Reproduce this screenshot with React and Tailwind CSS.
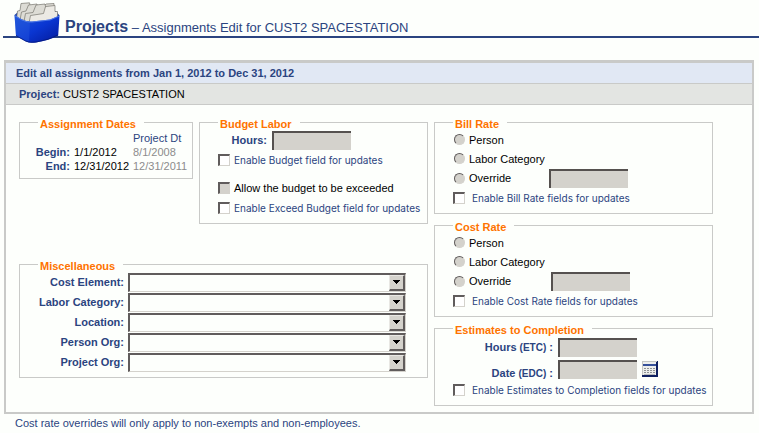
import React from "react";

const miscFields = [
	{ id: "costElement", label: "Cost Element:" },
	{ id: "laborCategory", label: "Labor Category:" },
	{ id: "location", label: "Location:" },
	{ id: "personOrg", label: "Person Org:" },
	{ id: "projectOrg", label: "Project Org:" },
];

function DrawerIcon() {
	return (
		<svg width="48" height="42" viewBox="0 0 48 42" aria-hidden="true">
			<defs>
				<linearGradient id="front" x1="0" y1="0" x2="1" y2="1">
					<stop offset="0" stopColor="#1c55d8" />
					<stop offset="0.5" stopColor="#0a36d2" />
					<stop offset="1" stopColor="#04199a" />
				</linearGradient>
			</defs>
			<path d="M1.500 13 L5 10 L43 9 L46.500 13.500 L40 22 L6 20Z" fill="#1a3fa8" />
			{/* Folders, back to front */}
			<g fill="#dddcd5" stroke="#77766f" strokeWidth="0.7">
				<path d="M3.500 17 L4.500 9 L7 8.500 L8 1.500 L16.500 0.800 L17.500 5 L31 4 L33 2 L41 1.500 V18Z" />
				<path d="M7 18 L8.500 10 L13 9 L15.500 3 L24 2 L25 6 L36 5 V19Z" />
				<path d="M11 19.500 L12.500 11.500 L20 10.500 L23 3 L32 2 L33 7 L38 7 V19Z" />
				<path
					d="M16 21 L17.500 13.500 L30.500 11.500 L32.500 4.500 L42 3.500 L42 9.500 L44.500 9.500 L44.500 18Z"
					fill="#eceae4"
				/>
			</g>
			{/* Drawer body */}
			<path
				d="M1.500 13 L9 17.500 Q14 20 19 19.500 L37 17.500 L46.500 13.500 L45.200 33.500 Q36 38.500 23 40.500 Q17 41.500 13 39.500 L3 34Z"
				fill="url(#front)"
			/>
			<path d="M1.500 13 L9 17.500 Q14 20 17 19.700 L16 40.800 L13 39.500 L3 34Z" fill="#2e62e0" opacity="0.35" />
			<path d="M2 13.800 L9 18 Q14 20.500 19 20 L37 18 L46 14.200" fill="none" stroke="#5c86ee" strokeWidth="0.8" />
			<path d="M3 33.600 L13 39.200 Q17 41 23 40 Q36 38 45 33" fill="none" stroke="#04187a" strokeWidth="0.8" />
		</svg>
	);
}

function CalendarIcon() {
	return (
		<svg width="16" height="16" viewBox="0 0 16 16" shapeRendering="crispEdges" aria-hidden="true">
			<rect width="16" height="16" fill="#0f2060" />
			<rect width="14" height="14" fill="#c4c6c3" />
			<rect x="14" width="1" height="1" fill="#c4c6c3" />
			<rect x="1" y="1" width="13" height="13" fill="#eceeec" />
			<rect x="1" y="3" width="13" height="2" fill="#35509a" />
			<path d="M2 7.500H13M2 9.500H13M2 11.500H13" stroke="#8f9294" strokeDasharray="2 1" />
			<path d="M2 13.500H13" stroke="#b9bbbc" />
		</svg>
	);
}

function Group({ title, className = "", children }) {
	return (
		<fieldset className={`min-w-0 border border-[#c9cac8] pb-[5px] ${className}`}>
			<legend className="ml-[18px] pt-1 pl-[2px] pr-2 text-[11px] leading-3 font-bold text-[#ff7300]">
				{title}
			</legend>
			{children}
		</fieldset>
	);
}

function DisabledInput({ id, label }) {
	return (
		<input
			id={id}
			type="text"
			disabled
			aria-label={label}
			className="h-[19px] w-[79px] border-t-2 border-l-2 border-t-[#55514f] border-l-[#55514f] bg-[#d4d2cc] px-1"
		/>
	);
}

function Check({ id, label, disabled, small = true, wide }) {
	return (
		<div className={`flex h-5 items-center pl-[18px] ${wide ? "gap-[7px]" : "gap-1"}`}>
			<input
				id={id}
				type="checkbox"
				disabled={disabled}
				className={`size-3 shrink-0 appearance-none border-t-2 border-r border-b border-l-2 border-t-[#605c5c] border-r-[#d4d2cc] border-b-[#d4d2cc] border-l-[#605c5c] ${disabled ? "bg-[#d4d2cc]" : "bg-white"}`}
			/>
			<label
				htmlFor={id}
				className={`whitespace-nowrap ${small ? "font-[Inter,sans-serif] text-[10px] text-[#2b4480]" : "text-[11px] text-black"}`}
			>
				{label}
			</label>
		</div>
	);
}

function Radio({ id, name, label }) {
	return (
		<>
			<input
				id={id}
				name={name}
				type="radio"
				disabled
				className="size-[11px] shrink-0 appearance-none rounded-full border border-t-[#605c5c] border-r-[#d4d2cc] border-b-[#d4d2cc] border-l-[#605c5c] bg-[#d4d2cc]"
			/>
			<label htmlFor={id} className="text-black">
				{label}
			</label>
		</>
	);
}

function RateGroup({ id, title, overrideWidth }) {
	return (
		<Group title={title}>
			<div className="flex h-[19px] items-center gap-1 pl-[19px]">
				<Radio id={`${id}Person`} name={id} label="Person" />
			</div>
			<div className="flex h-[19px] items-center gap-1 pl-[19px]">
				<Radio id={`${id}Labor`} name={id} label="Labor Category" />
			</div>
			<div className="flex h-5 items-center gap-1 pl-[19px]">
				<div className={`flex items-center gap-1 ${overrideWidth}`}>
					<Radio id={`${id}Override`} name={id} label="Override" />
				</div>
				<DisabledInput label={`${title} override`} />
			</div>
			<Check id={`${id}Enable`} label={`Enable ${title} fields for updates`} wide />
		</Group>
	);
}

function MiscSelect({ id, label }) {
	return (
		<div className="flex h-5 items-center gap-1">
			<label htmlFor={id} className="w-[104px] text-right font-bold whitespace-nowrap">
				{label}
			</label>
			<div className="relative mr-[21px] grow">
				<select
					id={id}
					className="block h-[19px] w-full appearance-none border-t-2 border-r border-b border-l-2 border-t-[#605c5c] border-r-[#d4d2cc] border-b-[#d4d2cc] border-l-[#605c5c] bg-[#fdfffc] px-1"
				>
					<option></option>
				</select>
				<span className="pointer-events-none absolute top-[2px] right-px flex h-4 w-4 items-center justify-center border-t border-r-2 border-b-2 border-l border-t-[#e8e7e3] border-r-[#605c5c] border-b-[#605c5c] border-l-[#e8e7e3] bg-[#d4d2cc]">
					<svg width="7" height="4" viewBox="0 0 7 4" shapeRendering="crispEdges">
						<path d="M0 0H7V1H6V2H5V3H4V4H3V3H2V2H1V1H0Z" fill="#000" />
					</svg>
				</span>
			</div>
		</div>
	);
}

function App() {
	return (
		<div className="min-h-screen bg-[#fdfffc] font-['Liberation_Sans',Arial,sans-serif] text-[11px] leading-[14px] text-[#2b4480]">
			{/* Page header */}
			<header className="relative ml-[3px] flex h-[38px] items-end border-b-2 border-[#2b4480] pl-[62px]">
				<div className="absolute top-[2px] left-[10px]">
					<DrawerIcon />
				</div>
				<h1 className="text-[13px] leading-4 whitespace-nowrap">
					<span className="text-[16px] font-bold">Projects</span> – Assignments Edit for CUST2
					SPACESTATION
				</h1>
			</header>

			<main className="mt-[22px] mr-[5px] ml-1 border-2 border-t-3 border-[#c9cac8]">
				<h2 className="border-b border-[#c9cac8] bg-[#e1e8f4] pl-[10px] leading-5 font-bold">
					Edit all assignments from Jan 1, 2012 to Dec 31, 2012
				</h2>
				<p className="border-b border-[#c9cac8] bg-[#e3e5e2] pl-[13px] leading-5">
					<span className="font-bold">Project:</span>{" "}
					<span className="text-black">CUST2 SPACESTATION</span>
				</p>

				<div className="grid grid-cols-[409fr_279fr] items-start gap-[6px] pt-[9px] pr-[39px] pb-[6px] pl-[13px]">
					<div>
						<div className="grid grid-cols-[174fr_229fr] items-start gap-[6px]">
							<Group title="Assignment Dates">
								<table className="mt-px leading-[14px]">
									<thead>
										<tr>
											<td className="w-[50px]"></td>
											<td className="w-[63px]"></td>
											<th className="text-left font-normal whitespace-nowrap">Project Dt</th>
										</tr>
									</thead>
									<tbody>
										<tr>
											<th className="text-right font-bold">Begin:</th>
											<td className="pl-1 text-black">1/1/2012</td>
											<td className="text-[#8c8c8c]">8/1/2008</td>
										</tr>
										<tr>
											<th className="text-right font-bold">End:</th>
											<td className="pl-1 text-black">12/31/2012</td>
											<td className="text-[#8c8c8c]">12/31/2011</td>
										</tr>
									</tbody>
								</table>
							</Group>

							<Group title="Budget Labor">
								<div className="flex h-5 items-center gap-[5px]">
									<label htmlFor="budgetHours" className="w-[67px] text-right font-bold">
										Hours:
									</label>
									<DisabledInput id="budgetHours" />
								</div>
								<Check id="enableBudget" label="Enable Budget field for updates" />
								<div className="mt-2">
									<Check
										id="allowExceed"
										label="Allow the budget to be exceeded"
										small={false}
										disabled
									/>
									<Check id="enableExceed" label="Enable Exceed Budget field for updates" />
								</div>
							</Group>
						</div>

						<Group title="Miscellaneous" className="mt-8">
							{miscFields.map((field) => (
								<MiscSelect key={field.id} id={field.id} label={field.label} />
							))}
						</Group>
					</div>

					<div className="flex flex-col gap-[3px]">
						<RateGroup id="bill" title="Bill Rate" overrideWidth="w-[91px]" />
						<RateGroup id="cost" title="Cost Rate" overrideWidth="w-[93px]" />

						<Group title="Estimates to Completion">
							<div className="flex h-[22px] items-center gap-[5px]">
								<label htmlFor="etcHours" className="w-[118px] text-right font-bold">
									Hours <span className="text-[10px]">(ETC)</span> :
								</label>
								<DisabledInput id="etcHours" />
							</div>
							<div className="flex h-[22px] items-center gap-[5px]">
								<label
									htmlFor="edcDate"
									className="w-[118px] self-end text-right leading-3 font-bold"
								>
									Date <span className="text-[10px]">(EDC)</span> :
								</label>
								<DisabledInput id="edcDate" />
								<button type="button" aria-label="Pick date">
									<CalendarIcon />
								</button>
							</div>
							<Check id="enableEtc" label="Enable Estimates to Completion fields for updates" wide />
						</Group>
					</div>
				</div>
			</main>

			<p className="mt-[2px] pl-[15px]">
				Cost rate overrides will only apply to non-exempts and non-employees.
			</p>
		</div>
	);
}

export default App;
